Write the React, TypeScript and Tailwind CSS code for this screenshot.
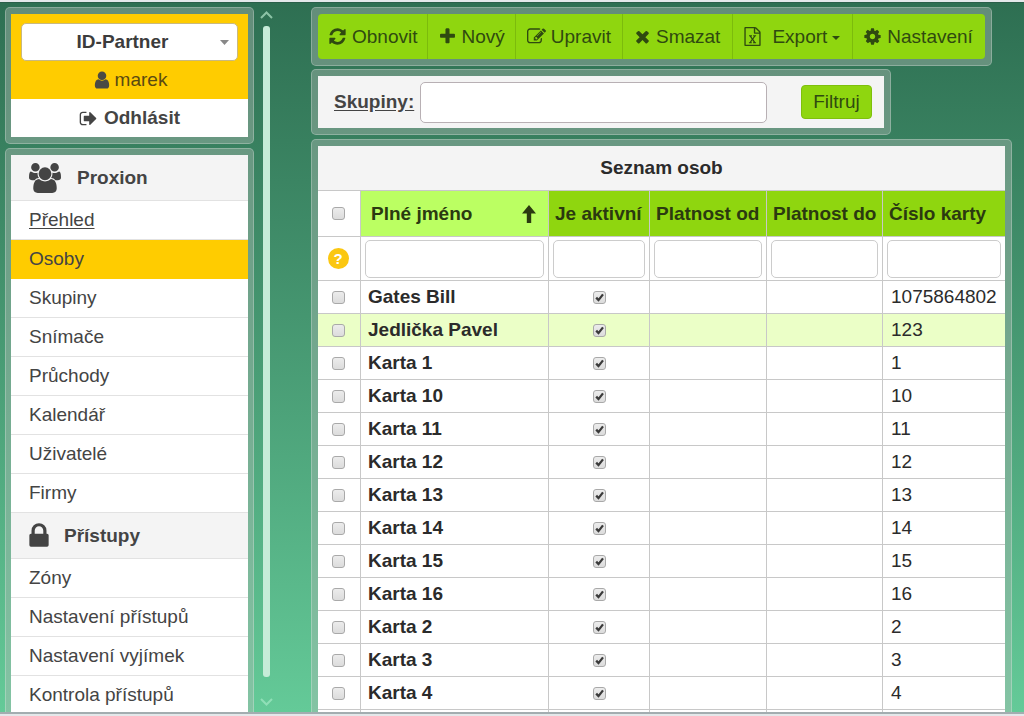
import { useState } from 'react';
import type { ReactNode } from 'react';
import { clsx } from 'clsx';

const ICONS = {
  refresh:
    'M1639 1056q0 5-1 7-64 268-268 434.5t-478 166.5q-146 0-282.5-55t-243.5-157l-129 129q-19 19-45 19t-45-19-19-45v-448q0-26 19-45t45-19h448q26 0 45 19t19 45-19 45l-137 137q71 66 161 102t187 36q134 0 250-65t186-179q11-17 53-117 8-23 30-23h192q13 0 22.5 9.5t9.5 22.5zm25-800v448q0 26-19 45t-45 19h-448q-26 0-45-19t-19-45 19-45l138-138q-148-137-349-137-134 0-250 65t-186 179q-11 17-53 117-8 23-30 23h-199q-13 0-22.5-9.5t-9.5-22.5v-7q65-268 270-434.5t480-166.5q146 0 284 55.5t245 156.5l130-129q19-19 45-19t45 19 19 45z',
  plus:
    'M1600 736v192q0 40-28 68t-68 28h-416v416q0 40-28 68t-68 28h-192q-40 0-68-28t-28-68v-416h-416q-40 0-68-28t-28-68v-192q0-40 28-68t68-28h416v-416q0-40 28-68t68-28h192q40 0 68 28t28 68v416h416q40 0 68 28t28 68z',
  edit:
    'M888 1184l116-116-152-152-116 116v56h96v96h56zm440-720q-16-16-33 1l-350 350q-17 17-1 33t33-1l350-350q17-17 1-33zm80 594v190q0 119-84.5 203.5t-203.5 84.5h-832q-119 0-203.5-84.5t-84.5-203.5v-832q0-119 84.5-203.5t203.5-84.5h832q63 0 117 25 15 7 18 23 3 17-9 29l-49 49q-14 14-32 8-23-6-45-6h-832q-66 0-113 47t-47 113v832q0 66 47 113t113 47h832q66 0 113-47t47-113v-126q0-13 9-22l64-64q15-15 35-7t20 29zm-96-738l288 288-672 672h-288v-288zm444 132l-92 92-288-288 92-92q28-28 68-28t68 28l152 152q28 28 28 68t-28 68z',
  times:
    'M1490 1322q0 40-28 68l-136 136q-28 28-68 28t-68-28l-294-294-294 294q-28 28-68 28t-68-28l-136-136q-28-28-28-68t28-68l294-294-294-294q-28-28-28-68t28-68l136-136q28-28 68-28t68 28l294 294 294-294q28-28 68-28t68 28l136 136q28 28 28 68t-28 68l-294 294 294 294q28 28 28 68z',
  excel:
    'M1596 380q28 28 48 76t20 88v1152q0 40-28 68t-68 28h-1344q-40 0-68-28t-28-68v-1600q0-40 28-68t68-28h896q40 0 88 20t76 48zm-444-244v376h376q-10-29-22-41l-313-313q-12-12-41-22zm384 1528v-1024h-416q-40 0-68-28t-28-68v-416h-768v1536h1280zm-979-234v106h281v-106h-75l103-161q5-7 10-16.5t7.5-13.5 3.5-4h2q1 4 5 10 2 4 4.5 7.5t6 8 6.5 8.5l107 161h-76v106h291v-106h-68l-192-273 195-282h67v-107h-279v107h74l-103 159q-4 7-10 16.5t-9 13.5l-2 3h-2q-1-4-5-10-6-11-17-23l-106-159h76v-107h-290v107h68l189 272-194 283h-68z',
  cog:
    'M1152 896q0-106-75-181t-181-75-181 75-75 181 75 181 181 75 181-75 75-181zm512-109v222q0 12-8 23t-20 13l-185 28q-19 54-39 91 35 50 107 138 10 12 10 25t-9 23q-27 37-99 108t-94 71q-12 0-26-9l-138-108q-44 23-91 38-16 136-29 186-7 28-36 28h-222q-14 0-24.5-8.5t-11.5-21.5l-28-184q-49-16-90-37l-141 107q-10 9-25 9-14 0-25-11-126-114-165-168-7-10-7-23 0-12 8-23 15-21 51-66.5t54-70.5q-27-50-41-99l-183-27q-13-2-21-12.5t-8-23.5v-222q0-12 8-23t19-13l186-28q14-46 39-92-40-57-107-138-10-12-10-24 0-10 9-23 26-36 98.5-107.5t94.5-71.5q13 0 26 10l138 107q44-23 91-38 16-136 29-186 7-28 36-28h222q14 0 24.5 8.5t11.5 21.5l28 184q49 16 90 37l142-107q9-9 24-9 13 0 25 10 129 119 165 170 7 8 7 22 0 12-8 23-15 21-51 66.5t-54 70.5q26 50 41 98l183 28q13 2 21 12.5t8 23.5z',
  user:
    'M1536 1399q0 109-62.5 187t-150.5 78h-854q-88 0-150.5-78t-62.5-187q0-85 8.5-160.5t31.5-152 58.5-131 94-89 134.5-34.5q131 128 313 128t313-128q76 0 134.5 34.5t94 89 58.5 131 31.5 152 8.5 160.5zm-256-887q0 159-112.5 271.5t-271.5 112.5-271.5-112.5-112.5-271.5 112.5-271.5 271.5-112.5 271.5 112.5 112.5 271.5z',
  signOut:
    'M704 1440q0 4 1 20t.5 26.5-3 23.5-10 19.5-20.5 6.5h-320q-119 0-203.5-84.5t-84.5-203.5v-704q0-119 84.5-203.5t203.5-84.5h320q13 0 22.5 9.5t9.5 22.5q0 4 1 20t.5 26.5-3 23.5-10 19.5-20.5 6.5h-320q-66 0-113 47t-47 113v704q0 66 47 113t113 47h312l11.5 1 11.5 3 8 5.5 7 9 2 13.5zm928-544q0 26-19 45l-544 544q-19 19-45 19t-45-19-19-45v-288h-448q-26 0-45-19t-19-45v-384q0-26 19-45t45-19h448v-288q0-26 19-45t45-19 45 19l544 544q19 19 19 45z',
  lock:
    'M640 768h512v-192q0-106-75-181t-181-75-181 75-75 181v192zm832 96v576q0 40-28 68t-68 28h-960q-40 0-68-28t-28-68v-576q0-40 28-68t68-28h32v-192q0-184 132-316t316-132 316 132 132 316v192h32q40 0 68 28t28 68z',
  users:
    'M657 896q-162 5-265 128h-134q-82 0-138-40.5t-56-118.5q0-353 124-353 6 0 43.5 21t97.5 42.5 119 21.5q67 0 133-23-5 37-5 66 0 139 81 256zm1071 637q0 120-73 189.5t-194 69.5h-874q-121 0-194-69.5t-73-189.5q0-53 3.5-103.5t14-109 26.5-108.5 43-97.5 62-81 85.5-53.5 111.5-20q10 0 43 21.5t73 48 107 48 135 21.5 135-21.5 107-48 73-48 43-21.5q61 0 111.5 20t85.5 53.5 62 81 43 97.5 26.5 108.5 14 109 3.5 103.5zm-1024-1277q0 106-75 181t-181 75-181-75-75-181 75-181 181-75 181 75 75 181zm704 384q0 159-112.5 271.5t-271.5 112.5-271.5-112.5-112.5-271.5 112.5-271.5 271.5-112.5 271.5 112.5 112.5 271.5zm576 225q0 78-56 118.5t-138 40.5h-134q-103-123-265-128 81-117 81-256 0-29-5-66 66 23 133 23 59 0 119-21.5t97.5-42.5 43.5-21q124 0 124 353zm-128-609q0 106-75 181t-181 75-181-75-75-181 75-181 181-75 181 75 75 181z',
};

type IconName = keyof typeof ICONS;

const VIEW_BOXES: Partial<Record<IconName, string>> = {
  users: '64 0 1920 1792',
  lock: '320 0 1152 1792',
};

function Icon({ name, className }: { name: IconName; className: string }) {
  return (
    <svg
      viewBox={VIEW_BOXES[name] ?? '0 0 1792 1792'}
      fill="currentColor"
      aria-hidden="true"
      className={clsx('shrink-0', className)}
    >
      <path d={ICONS[name]} />
    </svg>
  );
}

function Panel({ className = 'p-[6px]', children }: { className?: string; children: ReactNode }) {
  return (
    <div className={clsx('rounded-[5px] border border-white/25 bg-[#b4bcb6]/40', className)}>
      {children}
    </div>
  );
}

function Check({ label, on = false }: { label: string; on?: boolean }) {
  const [checked, setChecked] = useState(on);
  return (
    <span className="relative mx-auto block size-[13px]">
      <input
        type="checkbox"
        aria-label={label}
        checked={checked}
        onChange={() => setChecked(!checked)}
        className="block size-[13px] appearance-none rounded-[3px] border border-[#a9a9a9] bg-gradient-to-b from-[#ececec] to-[#dcdcdc]"
      />
      {checked && (
        <svg viewBox="0 0 13 13" aria-hidden="true" className="pointer-events-none absolute inset-0 size-[13px]">
          <path d="M3.2 6.6L5.5 9.1L10 3.4" fill="none" stroke="#3a3a3a" strokeWidth="2.3" />
        </svg>
      )}
    </span>
  );
}

const MENU: { title: string; icon: IconName; items: string[] }[] = [
  {
    title: 'Proxion',
    icon: 'users',
    items: ['Přehled', 'Osoby', 'Skupiny', 'Snímače', 'Průchody', 'Kalendář', 'Uživatelé', 'Firmy'],
  },
  {
    title: 'Přístupy',
    icon: 'lock',
    items: ['Zóny', 'Nastavení přístupů', 'Nastavení vyjímek', 'Kontrola přístupů'],
  },
];

const ACTIONS: { label: string; icon: IconName; spacing: string }[] = [
  { label: 'Obnovit', icon: 'refresh', spacing: 'gap-[5px] pl-[10px] pr-[10px]' },
  { label: 'Nový', icon: 'plus', spacing: 'gap-[4px] pl-[10px] pr-[10px]' },
  { label: 'Upravit', icon: 'edit', spacing: 'gap-[5px] pl-[11px] pr-[11px]' },
  { label: 'Smazat', icon: 'times', spacing: 'gap-[4px] pl-[10px] pr-[12px]' },
  { label: 'Export', icon: 'excel', spacing: 'gap-[10px] pl-[10px] pr-[12px]' },
  { label: 'Nastavení', icon: 'cog', spacing: 'gap-[5px] pl-[10px] pr-[12px]' },
];

const COLUMNS = ['Je aktivní', 'Platnost od', 'Platnost do', 'Číslo karty'];

const PEOPLE: [string, string][] = [
  ['Gates Bill', '1075864802'],
  ['Jedlička Pavel', '123'],
  ['Karta 1', '1'],
  ['Karta 10', '10'],
  ['Karta 11', '11'],
  ['Karta 12', '12'],
  ['Karta 13', '13'],
  ['Karta 14', '14'],
  ['Karta 15', '15'],
  ['Karta 16', '16'],
  ['Karta 2', '2'],
  ['Karta 3', '3'],
  ['Karta 4', '4'],
];

function Sidebar() {
  return (
    <aside className="flex w-[249px] shrink-0 flex-col gap-1">
      <Panel className="px-[5px] py-[6px]">
        <div className="flex h-[85px] flex-col items-center bg-[#ffcc00] px-[10px] pt-[9px]">
          <div className="relative w-full">
            <select
              aria-label="Firma"
              className="h-[38px] w-full appearance-none rounded-[5px] border border-[#c9b980] bg-white pr-[14px] text-center font-bold text-[#3c3c3c] [text-align-last:center]"
            >
              <option>ID-Partner</option>
            </select>
            <svg viewBox="0 0 9 5" aria-hidden="true" className="pointer-events-none absolute top-[17px] right-[9px] h-[5px] w-[9px]">
              <path d="M0 0h9l-4.500 5z" fill="#888" />
            </svg>
          </div>
          <div className="flex h-[38px] items-center gap-[3px] text-[#5a4a12]">
            <Icon name="user" className="size-[20px] text-[#4a4a44]" />
            marek
          </div>
        </div>
        <a href="#odhlasit" className="flex h-[38px] items-center justify-center gap-[6px] bg-white font-bold">
          <Icon name="signOut" className="size-[19px]" />
          Odhlásit
        </a>
      </Panel>
      <Panel className="px-[5px] py-[6px]">
        <nav className="bg-white">
          {MENU.map((group) => (
            <section key={group.title}>
              <h2
                className={clsx(
                  'flex h-[46px] items-center border-b border-[#e2e2e2] bg-[#f4f4f4] pl-[18px] font-bold',
                  group.icon === 'users' ? 'gap-4' : 'gap-[15px]',
                )}
              >
                <Icon name={group.icon} className={group.icon === 'users' ? 'h-[30px] w-[32px]' : 'h-[30px] w-[20px]'} />
                {group.title}
              </h2>
              <ul>
                {group.items.map((item) => (
                  <li key={item}>
                    <a
                      href={`#${item}`}
                      className={clsx(
                        'flex h-[39px] items-center border-b pl-[18px]',
                        item === 'Osoby' ? 'border-[#ffcc00] bg-[#ffcc00]' : 'border-[#e2e2e2]',
                        item === 'Přehled' && 'underline underline-offset-2',
                      )}
                    >
                      {item}
                    </a>
                  </li>
                ))}
              </ul>
            </section>
          ))}
        </nav>
      </Panel>
    </aside>
  );
}

function ScrollRail() {
  return (
    <div className="flex w-[13px] shrink-0 flex-col items-center pt-[4px] pb-[6px] text-[#8cc3a6]" aria-hidden="true">
      <svg viewBox="0 0 13 8" className="h-[8px] w-[13px]">
        <path d="M1 7l5.5-5.5L12 7" fill="none" stroke="currentColor" strokeWidth="2" />
      </svg>
      <div className="mt-[7px] mb-[21px] w-[7px] flex-1 rounded-[3px] bg-[#c6ecd8]" />
      <svg viewBox="0 0 13 8" className="h-[8px] w-[13px]">
        <path d="M1 1l5.5 5.5L12 1" fill="none" stroke="#90dfb7" strokeWidth="2" />
      </svg>
    </div>
  );
}

function PeopleTable() {
  const cell = 'border-r border-b border-[#c8c8c8]';
  return (
    <table className="w-full table-fixed border-separate border-spacing-0 bg-white text-[#2b2b2b]">
      <caption className="h-[45px] border-b border-[#c8c8c8] bg-[#f4f4f4] leading-[44px] font-bold">Seznam osob</caption>
      <colgroup>
        <col className="w-[43px]" />
        <col />
        <col className="w-[101px]" />
        <col className="w-[117px]" />
        <col className="w-[116px]" />
        <col className="w-[122px]" />
      </colgroup>
      <thead>
        <tr className="h-[46px] text-left text-[#2b3a10]">
          <th className={clsx(cell, 'bg-white pr-[2px]')}>
            <Check label="Vybrat vše" />
          </th>
          <th className={clsx(cell, 'bg-[#bbff62] pr-[12px] pl-[10px]')}>
            <button type="button" className="flex w-full items-center justify-between font-bold">
              Plné jméno
              <svg viewBox="0 0 14 18" aria-hidden="true" className="h-[18px] w-[14px]">
                <path d="M7 0l7 8.500H9.200V18H4.800V8.500H0z" fill="currentColor" />
              </svg>
            </button>
          </th>
          {COLUMNS.map((title) => (
            <th key={title} className={clsx(cell, 'bg-[#8fd60f] pl-[6px] whitespace-nowrap last:border-r-0')}>
              {title}
            </th>
          ))}
        </tr>
        <tr className="h-[44px]">
          <td className={clsx(cell, 'pr-[2px]')}>
            <button
              type="button"
              aria-label="Nápověda"
              className="mx-auto flex size-[21px] items-center justify-center rounded-full bg-[#fbc711] text-[15px] leading-none font-bold text-white"
            >
              ?
            </button>
          </td>
          {['Plné jméno', ...COLUMNS].map((title) => (
            <td key={title} className={clsx(cell, 'px-[4px] last:border-r-0')}>
              <input
                type="text"
                aria-label={`Filtr: ${title}`}
                className="block h-[38px] w-full rounded-[5px] border border-[#cccccc] bg-white px-2"
              />
            </td>
          ))}
        </tr>
      </thead>
      <tbody>
        {PEOPLE.map(([name, card]) => (
          <tr key={name} className={clsx('h-[33px]', name === 'Jedlička Pavel' && 'bg-[#ebffc7]')}>
            <td className={clsx(cell, 'pr-[2px]')}>
              <Check label={`Vybrat ${name}`} />
            </td>
            <td className={clsx(cell, 'pl-[7px] font-bold')}>{name}</td>
            <td className={cell}>
              <Check label={`${name} je aktivní`} on />
            </td>
            <td className={cell} />
            <td className={cell} />
            <td className="border-b border-[#c8c8c8] pl-[8px]">{card}</td>
          </tr>
        ))}
        <tr className="h-[33px]">
          <td className={cell} />
          <td className={cell} />
          <td className={cell} />
          <td className={cell} />
          <td className={cell} />
          <td className="border-b border-[#c8c8c8]" />
        </tr>
      </tbody>
    </table>
  );
}

export default function App() {
  return (
    <div className="flex h-screen flex-col bg-[#e4e8ea] pt-[2px] pb-[2px] font-['Liberation_Sans',Arial,sans-serif] text-[19px] leading-6 text-[#444444]">
      <div className="flex min-h-0 flex-1 overflow-hidden border-t border-b-2 border-t-[#2a5f49] border-b-[#a3adb0] bg-gradient-to-b from-[#2e6f52] to-[#64ca98] pt-[4px] pr-3 pl-[5px]">
        <Sidebar />
        <div className="ml-[6px] flex">
          <ScrollRail />
        </div>
        <main className="ml-[38px] flex min-w-0 flex-1 flex-col items-start">
          <Panel>
            <div className="flex h-[45px] overflow-hidden rounded-[4px] bg-[#8fd60f] text-[#2f4a10]">
              {ACTIONS.map(({ label, icon, spacing }) => (
                <button
                  key={label}
                  type="button"
                  className={clsx('flex items-center border-r border-[#7cbb0c] whitespace-nowrap last:border-r-0', spacing)}
                >
                  <Icon name={icon} className="size-[19px]" />
                  <span className="flex items-center gap-[5px]">
                    {label}
                    {icon === 'excel' && (
                      <svg viewBox="0 0 8 4" aria-hidden="true" className="mt-[3px] h-[4px] w-[8px]">
                        <path d="M0 0h8L4 4z" fill="currentColor" />
                      </svg>
                    )}
                  </span>
                </button>
              ))}
            </div>
          </Panel>
          <Panel className="mt-[3px] p-[6px]">
            <form className="flex h-[52px] items-center bg-[#f4f4f4] pr-[12px] pl-[16px]" onSubmit={(e) => e.preventDefault()}>
              <label htmlFor="groups" className="font-bold underline underline-offset-2">
                Skupiny:
              </label>
              <input
                id="groups"
                type="text"
                className="ml-[6px] h-[41px] w-[347px] rounded-[5px] border border-[#b8b0b4] bg-white px-2"
              />
              <button type="submit" className="ml-[34px] h-[34px] rounded-[4px] border border-[#7fc00c] bg-[#8fd60f] px-[11px] text-[#2f4a10]">
                Filtruj
              </button>
            </form>
          </Panel>
          <Panel className="mt-[4px] w-full p-[6px]">
            <PeopleTable />
          </Panel>
        </main>
      </div>
    </div>
  );
}
